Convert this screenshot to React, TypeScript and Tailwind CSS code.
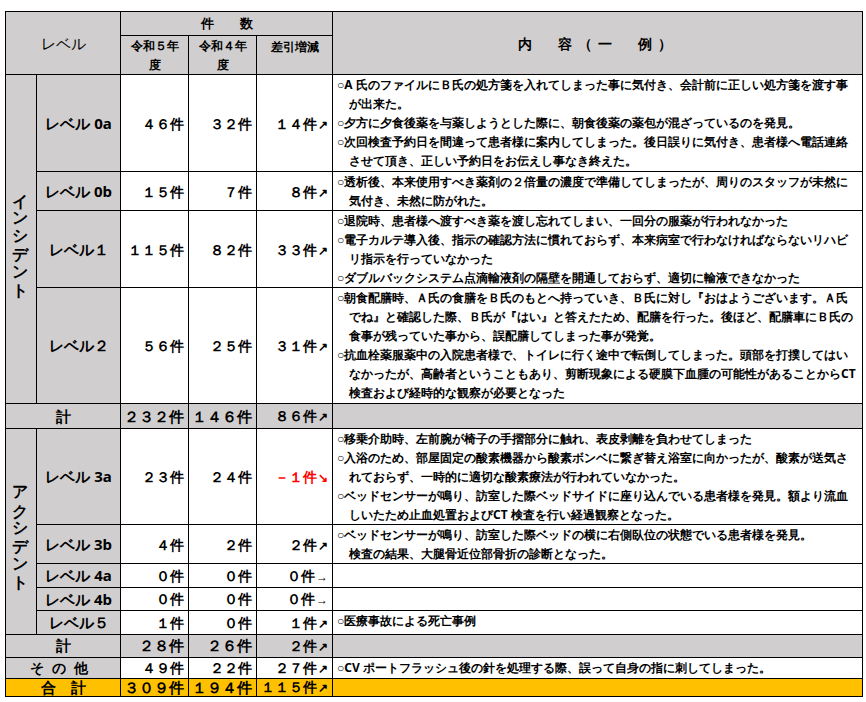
const gray = "bg-[#d0cece]";

type Row = {
  label: string;
  h: number;
  a: string;
  b: string;
  d: string;
  arrow?: string;
  red?: boolean;
  lines: string[];
};

const incident: Row[] = [
  {
    label: "レベル 0a",
    h: 97,
    a: "４６件",
    b: "３２件",
    d: "１４件",
    lines: [
      "○A 氏のファイルにＢ氏の処方箋を入れてしまった事に気付き、会計前に正しい処方箋を渡す事が出来た。",
      "○夕方に夕食後薬を与薬しようとした際に、朝食後薬の薬包が混ざっているのを発見。",
      "○次回検査予約日を間違って患者様に案内してしまった。後日誤りに気付き、患者様へ電話連絡させて頂き、正しい予約日をお伝えし事なき終えた。",
    ],
  },
  {
    label: "レベル 0b",
    h: 39,
    a: "１５件",
    b: "７件",
    d: "８件",
    lines: ["○透析後、本来使用すべき薬剤の２倍量の濃度で準備してしまったが、周りのスタッフが未然に気付き、未然に防がれた。"],
  },
  {
    label: "レベル１",
    h: 77,
    a: "１１５件",
    b: "８２件",
    d: "３３件",
    lines: [
      "○退院時、患者様へ渡すべき薬を渡し忘れてしまい、一回分の服薬が行われなかった",
      "○電子カルテ導入後、指示の確認方法に慣れておらず、本来病室で行わなければならないリハビリ指示を行っていなかった",
      "○ダブルバックシステム点滴輸液剤の隔壁を開通しておらず、適切に輸液できなかった",
    ],
  },
  {
    label: "レベル２",
    h: 116,
    a: "５６件",
    b: "２５件",
    d: "３１件",
    lines: [
      "○朝食配膳時、Ａ氏の食膳をＢ氏のもとへ持っていき、Ｂ氏に対し『おはようございます。Ａ氏でね』と確認した際、Ｂ氏が『はい』と答えたため、配膳を行った。後ほど、配膳車にＢ氏の食事が残っていた事から、誤配膳してしまった事が発覚。",
      "○抗血栓薬服薬中の入院患者様で、トイレに行く途中で転倒してしまった。頭部を打撲してはいなかったが、高齢者ということもあり、剪断現象による硬膜下血腫の可能性があることからCT検査および経時的な観察が必要となった",
    ],
  },
];

const accident: Row[] = [
  {
    label: "レベル 3a",
    h: 96,
    a: "２３件",
    b: "２４件",
    d: "－１件",
    arrow: "↘",
    red: true,
    lines: [
      "○移乗介助時、左前腕が椅子の手摺部分に触れ、表皮剥離を負わせてしまった",
      "○入浴のため、部屋固定の酸素機器から酸素ボンベに繋ぎ替え浴室に向かったが、酸素が送気されておらず、一時的に適切な酸素療法が行われていなかった。",
      "○ベッドセンサーが鳴り、訪室した際ベッドサイドに座り込んでいる患者様を発見。額より流血しいたため止血処置およびCT 検査を行い経過観察となった。",
    ],
  },
  {
    label: "レベル 3b",
    h: 39,
    a: "４件",
    b: "２件",
    d: "２件",
    lines: ["○ベッドセンサーが鳴り、訪室した際ベッドの横に右側臥位の状態でいる患者様を発見。", "　検査の結果、大腿骨近位部骨折の診断となった。"],
  },
  { label: "レベル 4a", h: 23, a: "０件", b: "０件", d: "０件", arrow: "→", lines: [] },
  { label: "レベル 4b", h: 23, a: "０件", b: "０件", d: "０件", arrow: "→", lines: [] },
  { label: "レベル５", h: 23, a: "１件", b: "０件", d: "１件", lines: ["○医療事故による死亡事例"] },
];

const cell = "border border-black";
const num = `${cell} text-right pr-1 text-[14px] whitespace-nowrap overflow-hidden`;

function Arrow({ a = "↗" }: { a?: string }) {
  return <span className="font-['DejaVu_Sans',sans-serif] text-[12px] ml-[1px]">{a + "\uFE0E"}</span>;
}

function Content({ lines }: { lines: string[] }) {
  return (
    <td className={`${cell} align-top px-1 text-[12px] leading-[19px]`}>
      {lines.map((l, i) => (
        <p key={i} className="pl-[1em] -indent-[1em]">
          {l}
        </p>
      ))}
    </td>
  );
}

function Rows({ rows, group }: { rows: Row[]; group: string }) {
  return (
    <>
      {rows.map((r, i) => (
        <tr key={r.label} style={{ height: r.h }}>
          {i === 0 && (
            <td rowSpan={rows.length} className={`${cell} ${gray} text-center text-[16px]`}>
              <span className="[writing-mode:vertical-rl] inline-block">{group}</span>
            </td>
          )}
          <td className={`${cell} ${gray} text-center text-[15px] whitespace-nowrap`}>{r.label}</td>
          <td className={num}>{r.a}</td>
          <td className={num}>{r.b}</td>
          <td className={`${num} ${r.red ? "text-[#ff0000]" : ""}`}>
            {r.d}
            <Arrow a={r.arrow} />
          </td>
          <Content lines={r.lines} />
        </tr>
      ))}
    </>
  );
}

function SumRow({ a, b, d, label = "計", bg = gray, h = 25 }: { a: string; b: string; d: string; label?: string; bg?: string; h?: number }) {
  return (
    <tr style={{ height: h }} className={bg}>
      <td colSpan={2} className={`${cell} text-center text-[15px] leading-none`}>{label}</td>
      <td className={`${num} text-[15px] leading-none`}>{a}</td>
      <td className={`${num} text-[15px] leading-none`}>{b}</td>
      <td className={`${num} text-[14px] leading-none`}>
        {d}
        <Arrow />
      </td>
      <td className={cell}></td>
    </tr>
  );
}

export default function App() {
  return (
    <div className="w-[866px] h-[702px] bg-white pt-[11px] pl-[5px] font-['Noto_Sans_CJK_JP',sans-serif] font-bold text-black">
      <table className="table-fixed border-collapse w-[858px]">
        <colgroup>
          <col className="w-[31px]" />
          <col className="w-[84px]" />
          <col className="w-[68px]" />
          <col className="w-[68px]" />
          <col className="w-[76px]" />
          <col />
        </colgroup>
        <tbody>
          <tr className={`${gray} h-[24px]`}>
            <td rowSpan={2} colSpan={2} className={`${cell} text-center text-[15px] font-normal`}>レベル</td>
            <td colSpan={3} className={`${cell} text-center text-[13px]`}>件　　数</td>
            <td rowSpan={2} className={`${cell} text-center text-[14px] tracking-[6px]`}>内　容（一　例）</td>
          </tr>
          <tr className={`${gray} h-[38px]`}>
            <td className={`${cell} text-center text-[12px] leading-[19px] align-top px-[8px]`}>令和５年度</td>
            <td className={`${cell} text-center text-[12px] leading-[19px] align-top px-[8px]`}>令和４年度</td>
            <td className={`${cell} text-center text-[12px] align-top pt-[2px]`}>差引増減</td>
          </tr>
          <Rows rows={incident} group="インシデント" />
          <SumRow a="２３２件" b="１４６件" d="８６件" />
          <Rows rows={accident} group="アクシデント" />
          <SumRow a="２８件" b="２６件" d="２件" h={23} />
          <tr className="h-[21px]">
            <td colSpan={2} className={`${cell} ${gray} text-center text-[14px] tracking-[8px] leading-none`}>その他</td>
            <td className={`${num} text-[13px] leading-none`}>４９件</td>
            <td className={`${num} text-[13px] leading-none`}>２２件</td>
            <td className={`${num} text-[14px] leading-none`}>
              ２７件
              <Arrow />
            </td>
            <td className={`${cell} px-1 text-[12px] leading-none whitespace-nowrap`}>○CV ポートフラッシュ後の針を処理する際、誤って自身の指に刺してしまった。</td>
          </tr>
          <SumRow label="合　計" a="３０９件" b="１９４件" d="１１５件" bg="bg-[#ffc000]" h={18} />
        </tbody>
      </table>
    </div>
  );
}
